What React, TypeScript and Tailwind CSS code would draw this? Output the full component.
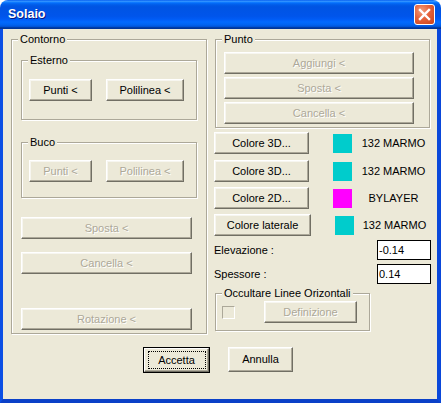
import React from 'react';

// Classic Win32 push button, beige face with 3D edges
const Btn: React.FC<{ label: string; disabled?: boolean; className?: string }> = ({ label, disabled, className = '' }) => (
  <button
    type="button"
    className={`flex items-center justify-center bg-[#ECE9D8] border border-t-white border-l-white border-r-[#716F64] border-b-[#716F64] shadow-[inset_-1px_-1px_0_#ACA899,inset_1px_1px_0_#F7F6F0] leading-none ${
      disabled ? 'text-[#ACA899] [text-shadow:1px_1px_0_#fff]' : 'text-black'
    } ${className}`}
  >
    {label}
  </button>
);

// Etched group box with caption sitting on the top line
const Group: React.FC<{ title: string; className?: string; children?: React.ReactNode }> = ({ title, className = '', children }) => (
  <div className={`relative border border-[#ACA899] shadow-[1px_1px_0_#fff,inset_1px_1px_0_#fff] ${className}`}>
    <span className="absolute -top-[7px] left-[6px] px-[2px] bg-[#ECE9D8] leading-[13px] text-black">{title}</span>
    {children}
  </div>
);

const ColorRow: React.FC<{ label: string; color: string; text: string; wide?: boolean; className?: string }> = ({ label, color, text, wide, className = '' }) => (
  <div className={`flex items-center h-[22px] ${className}`}>
    <Btn label={label} className={wide ? 'w-[97px] h-[22px]' : 'w-[95px] h-[22px]'} />
    <div className={`ml-[24px] w-[19px] h-[19px] ${color}`} />
    <div className="ml-[4px] flex-1 text-center text-black">{text}</div>
  </div>
);

export default function App() {
  return (
    <div className="w-[441px] h-[403px] font-['Liberation_Sans',Arial,sans-serif] text-[11px] bg-white">
      <div className="w-full h-full flex flex-col rounded-t-[8px] overflow-hidden">
        {/* title bar */}
        <div className="h-[29px] shrink-0 flex items-center pl-[8px] pr-[6px] bg-[linear-gradient(to_bottom,#0058EE_0%,#3593FF_4%,#288EFF_6%,#127DFF_8%,#036FFC_10%,#0262EE_14%,#0057E5_20%,#0054E3_24%,#0055EB_56%,#005BF5_66%,#026AFE_76%,#0062EF_86%,#0052D6_92%,#0040AB_94%,#003092_100%)]">
          <span className="text-white font-bold text-[12.5px] [text-shadow:1px_1px_0_#0A1883]">Solaio</span>
          <div className="ml-auto w-[21px] h-[21px] rounded-[3px] border border-white bg-[radial-gradient(circle_at_35%_30%,#F29C7A_0%,#E5623B_45%,#C84218_100%)] flex items-center justify-center">
            <svg width="13" height="13" viewBox="0 0 13 13">
              <path d="M2 2 L11 11 M11 2 L2 11" stroke="#fff" strokeWidth="2.4" strokeLinecap="square" />
            </svg>
          </div>
        </div>

        {/* client area */}
        <div className="flex-1 flex flex-col bg-[#ECE9D8] border-l-[3px] border-r-[4px] border-b-[4px] border-l-[#0B4FE4] border-r-[#0A48DA] border-b-[#0A40C8] pl-[8px] pt-[10px]">
          <div className="flex">
            {/* left column */}
            <Group title="Contorno" className="w-[196px] h-[295px] flex flex-col px-[9px] pt-[20px]">
              <Group title="Esterno" className="w-[176px] h-[60px] flex pl-[7px] pt-[18px] gap-[14px]">
                <Btn label="Punti <" className="w-[63px] h-[22px]" />
                <Btn label="Polilinea <" className="w-[78px] h-[22px]" />
              </Group>
              <Group title="Buco" className="mt-[22px] w-[176px] h-[56px] flex pl-[7px] pt-[17px] gap-[14px]">
                <Btn label="Punti <" disabled className="w-[63px] h-[22px]" />
                <Btn label="Polilinea <" disabled className="w-[78px] h-[22px]" />
              </Group>
              <Btn label="Sposta <" disabled className="mt-[19px] w-[171px] h-[22px]" />
              <Btn label="Cancella <" disabled className="mt-[13px] w-[171px] h-[22px]" />
              <Btn label="Rotazione <" disabled className="mt-[34px] w-[171px] h-[22px]" />
            </Group>

            {/* right column */}
            <div className="ml-[7px] w-[217px] flex flex-col">
              <Group title="Punto" className="ml-px w-[215px] h-[89px] flex flex-col pl-[8px] pt-[12px] gap-[3px]">
                <Btn label="Aggiungi <" disabled className="w-[190px] h-[22px]" />
                <Btn label="Sposta <" disabled className="w-[190px] h-[22px]" />
                <Btn label="Cancella <" disabled className="w-[190px] h-[22px]" />
              </Group>
              <ColorRow className="mt-[4px]" label="Colore 3D..." color="bg-[#00CCCC]" text="132 MARMO" />
              <ColorRow className="mt-[6px]" label="Colore 3D..." color="bg-[#00CCCC]" text="132 MARMO" />
              <ColorRow className="mt-[5px]" label="Colore 2D..." color="bg-[#FF00FF]" text="BYLAYER" />
              <ColorRow className="mt-[5px]" label="Colore laterale" color="bg-[#00CCCC]" text="132 MARMO" wide />

              <div className="mt-[4px] flex items-center h-[20px]">
                <span className="text-black">Elevazione :</span>
                <div className="ml-auto w-[54px] h-[20px] bg-white border border-black flex items-center pl-[1px] text-black">-0.14</div>
              </div>
              <div className="mt-[4px] flex items-center h-[20px]">
                <span className="text-black">Spessore :</span>
                <div className="ml-auto w-[54px] h-[20px] bg-white border border-black flex items-center pl-[1px] text-black">0.14</div>
              </div>

              <Group title="Occultare Linee Orizontali" className="mt-[9px] ml-px w-[155px] h-[38px] flex items-center pl-[6px]">
                <div className="w-[13px] h-[13px] border border-t-[#ACA899] border-l-[#ACA899] border-r-white border-b-white bg-[#ECE9D8]" />
                <Btn label="Definizione" disabled className="ml-[29px] w-[93px] h-[22px]" />
              </Group>
            </div>
          </div>

          {/* dialog buttons */}
          <div className="mt-[13px] ml-[132px] flex items-start gap-[18px]">
            <div className="w-[67px] h-[26px] border border-black flex">
              <button
                type="button"
                className="flex-1 flex items-center justify-center bg-[#ECE9D8] border border-t-white border-l-white border-r-[#716F64] border-b-[#716F64] shadow-[inset_-1px_-1px_0_#ACA899] text-black"
              >
                <span className="w-[58px] h-[18px] border border-dotted border-black flex items-center justify-center leading-none">Accetta</span>
              </button>
            </div>
            <Btn label="Annulla" className="w-[65px] h-[25px]" />
          </div>
        </div>
      </div>
    </div>
  );
}
